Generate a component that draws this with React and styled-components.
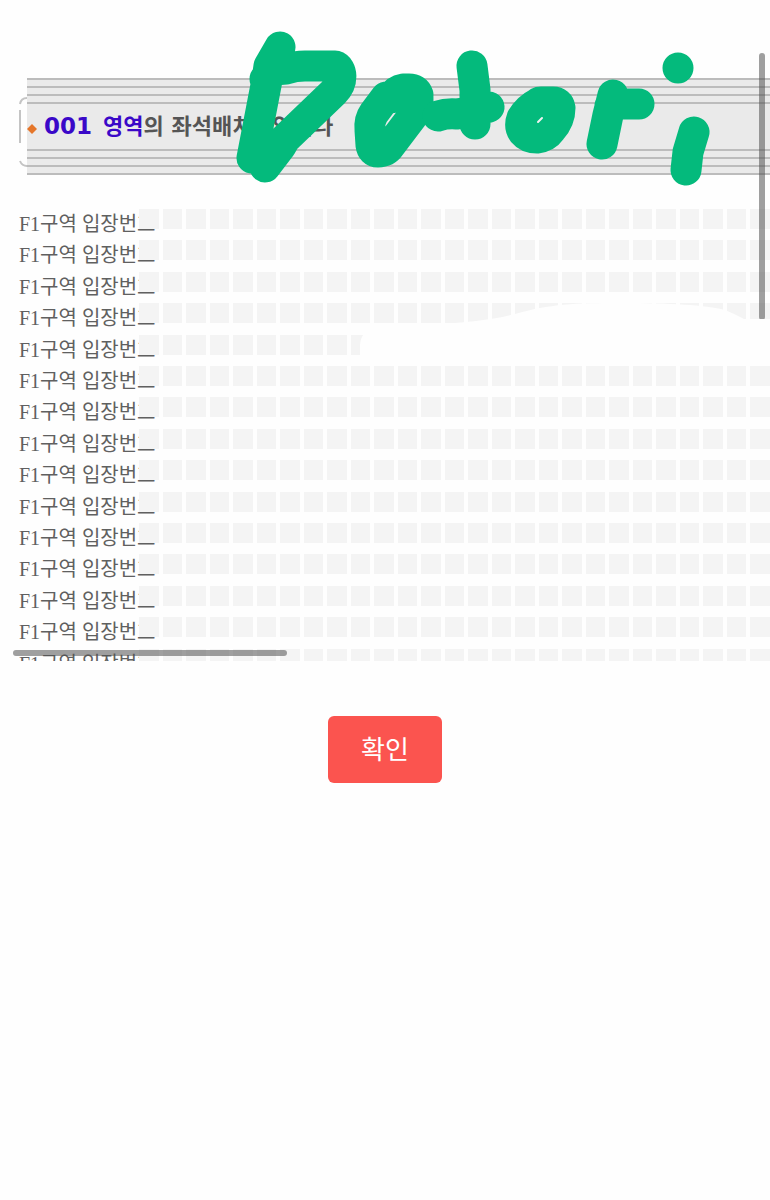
import React from "react";
import styled, { createGlobalStyle } from "styled-components";

const GlobalStyle = createGlobalStyle`
  *, *::before, *::after { box-sizing: border-box; }
  body { margin: 0; background: #fefefe; color: #555; }
`;

const Page = styled.main`
  position: relative;
  min-height: 100vh;
  padding-top: 78px;
  overflow: hidden;
`;

const Header = styled.header`
  position: relative;
  margin-left: 27px;
  background: #eaeaea;
`;

const Lines = styled.div`
  height: 26px;
  background: repeating-linear-gradient(#bcbcbc 0 2px, #eaeaea 2px 8px);
`;

const Frame = styled.svg`
  position: absolute;
  top: 18px;
  left: -8px;
  fill: none;
  stroke: #c4c4c4;
  stroke-width: 2;
`;

const Title = styled.h1`
  display: flex;
  align-items: center;
  gap: 7px;
  height: 45px;
  margin: 0;
  font: bold 22px/45px "DejaVu Sans", "Noto Sans CJK KR", sans-serif;
  white-space: pre;
`;

const Diamond = styled.svg`
  flex: none;
  fill: #e5762a;
`;

const Area = styled.span`
  color: #3a08c8;
`;

const AreaNumber = styled.span`
  margin-right: 3px;
  font-size: 23px;
`;

const SeatView = styled.section`
  position: relative;
  height: 452px;
  margin-top: 34px;
  overflow: hidden;
`;

const SeatRows = styled.ul`
  display: grid;
  grid-template-rows: repeat(15, 1fr);
  height: 471px;
  margin: 0;
  padding: 0 0 0 19px;
  list-style: none;
`;

const SeatRow = styled.li`
  display: flex;
  align-items: flex-start;
  min-height: 0;
`;

const RowLabel = styled.span`
  flex: none;
  width: 120px;
  font: 20px/30px "Liberation Serif", "Noto Sans CJK KR", serif;
  color: #606060;
  white-space: nowrap;
`;

const Seats = styled.span`
  position: relative;
  display: flex;
  flex: 1;
  gap: 4px;
  height: 20px;
  background: #fefefe;
`;

const Seat = styled.span`
  flex: 1;
  background: #f4f4f4;
`;

const Eraser = styled.svg`
  position: absolute;
  top: 92px;
  right: 0;
  z-index: 3;
  fill: #fefefe;
`;

const ScrollThumb = styled.span`
  position: absolute;
  z-index: 2;
  border-radius: 3px;
  background: rgba(80, 80, 80, 0.55);
`;

const VerticalThumb = styled(ScrollThumb)`
  top: 53px;
  right: 5px;
  width: 6px;
  height: 267px;
`;

const HorizontalThumb = styled(ScrollThumb)`
  bottom: 5px;
  left: 13px;
  width: 274px;
  height: 6px;
`;

const Actions = styled.div`
  display: flex;
  justify-content: center;
  margin-top: 55px;
`;

const ConfirmButton = styled.button`
  width: 114px;
  height: 67px;
  padding: 0 0 4px;
  border: 0;
  border-radius: 6px;
  background: #fb544f;
  color: #fff;
  font: 26px/36px "Noto Sans CJK KR", sans-serif;
  cursor: pointer;
`;

const Signature = styled.svg`
  position: absolute;
  top: 20px;
  left: 220px;
  z-index: 4;
  fill: none;
  stroke: #04ba7c;
  stroke-width: 31;
  stroke-linecap: round;
  stroke-linejoin: round;
  pointer-events: none;
`;

const Glint = styled.path`
  stroke: #f2f2f2;
  stroke-width: 2;
`;

const rows = Array.from({ length: 15 }, (_, i) => i);
const seats = Array.from({ length: 27 }, (_, i) => i);

export default function App() {
  return (
    <>
      <GlobalStyle />
      <Page>
        <Header>
          <Frame width="8" height="72" viewBox="0 0 8 72" aria-hidden="true">
            <path d="M1 8Q2 2 8 2M1 14V47M1 65Q3 70 8 70" />
          </Frame>
          <Lines />
          <Title>
            <Diamond width="10" height="14" viewBox="0 0 10 14" aria-hidden="true">
              <path d="M5 4L10 9L5 14L0 9Z" />
            </Diamond>
            <span>
              <Area><AreaNumber>001 </AreaNumber>영역</Area>의 좌석배치도입니다
            </span>
          </Title>
          <Lines />
        </Header>

        <SeatView>
          <SeatRows>
            {rows.map((row) => (
              <SeatRow key={row}>
                <RowLabel>F1구역 입장번호</RowLabel>
                <Seats>
                  {seats.map((seat) => (
                    <Seat key={seat} />
                  ))}
                </Seats>
              </SeatRow>
            ))}
          </SeatRows>
          <Eraser width="412" height="66" viewBox="358 301 412 66" aria-hidden="true">
            <path d="M360 362V345Q361 331 374 328C440 324 480 323 515 314C550 304 575 303 620 303C670 303 705 305 725 310Q735 314 744 319H770V362Z" />
          </Eraser>
          <HorizontalThumb />
        </SeatView>
        <VerticalThumb />

        <Actions>
          <ConfirmButton type="button">확인</ConfirmButton>
        </Actions>

        <Signature width="500" height="170" viewBox="220 20 500 170" role="img" aria-label="Datori">
          <path d="M280 47L269 66L267 80L252 158M265 79L274 70L286 69Q295 66 305 66H335C342 68 344 82 334 92L285 139L281 146L265 167" />
          <path d="M386 97L374 113Q369 120 370 130L371 145Q372 152 378 152Q386 152 390 146L412 117Q419 105 418 95Q416 89 409 89H403Q396 90 391 98" />
          <path d="M438 116Q447 113 457 114L475 111L489 107M472 66L475 90V124" />
          <path d="M538 103Q528 108 522 118Q519 126 523 132Q528 138 537 138Q546 137 551 130Q560 120 560 108Q559 102 553 102H541Q538 102 536 105" />
          <Glint d="M538 122L542 118" />
          <path d="M613 95L608 115L602 144M610 106L618 104H639" />
          <path d="M678 68V68M694 132L688 152L686 170" />
        </Signature>
      </Page>
    </>
  );
}
